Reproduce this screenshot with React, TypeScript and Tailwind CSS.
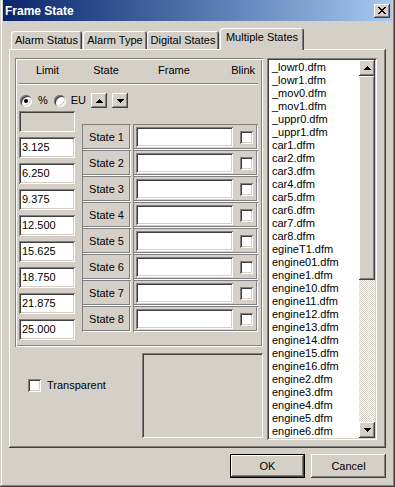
import React from 'react';

// win2000 bevels
const raised = "shadow-[inset_-1px_-1px_#404040,inset_1px_1px_#ffffff,inset_-2px_-2px_#808080,inset_2px_2px_#d4d0c8]";
const sunken = "shadow-[inset_1px_1px_#808080,inset_-1px_-1px_#ffffff,inset_2px_2px_#404040,inset_-2px_-2px_#d4d0c8]";
const etched = "shadow-[inset_1px_1px_#808080,inset_-1px_-1px_#ffffff,inset_-2px_-2px_#808080]";
const groupEdge = "shadow-[inset_1px_1px_#808080,inset_-1px_-1px_#ffffff,inset_2px_2px_#ffffff,inset_-2px_-2px_#808080]";

const limits = ["3.125", "6.250", "9.375", "12.500", "15.625", "18.750", "21.875", "25.000"];

const files = [
  "_lowr0.dfm", "_lowr1.dfm", "_mov0.dfm", "_mov1.dfm", "_uppr0.dfm", "_uppr1.dfm",
  "car1.dfm", "car2.dfm", "car3.dfm", "car4.dfm", "car5.dfm", "car6.dfm", "car7.dfm", "car8.dfm",
  "egineT1.dfm", "engine01.dfm", "engine1.dfm", "engine10.dfm", "engine11.dfm", "engine12.dfm",
  "engine13.dfm", "engine14.dfm", "engine15.dfm", "engine16.dfm", "engine2.dfm", "engine3.dfm",
  "engine4.dfm", "engine5.dfm", "engine6.dfm",
];

const Arrow = ({ down }: { down?: boolean }) => (
  <svg width="7" height="4" viewBox="0 0 7 4" shapeRendering="crispEdges">
    <path d={down ? "M0 0H7L3.5 4z" : "M3.5 0L7 4H0z"} fill="#000" />
  </svg>
);

const Checkbox = () => (
  <div className={`w-[13px] h-[13px] bg-white shrink-0 ${sunken}`} />
);

const Radio = ({ on }: { on?: boolean }) => (
  <div className="w-[12px] h-[12px] rounded-full bg-white shrink-0 flex items-center justify-center shadow-[inset_1px_1px_#808080,inset_-1px_-1px_#ffffff,inset_2px_2px_#404040,inset_-2px_-2px_#d4d0c8]">
    {on && <div className="w-[4px] h-[4px] rounded-full bg-black" />}
  </div>
);

const Tab = ({ label, w, ml }: { label: string; w: string; ml: string }) => (
  <div className={`${w} ${ml} h-[18px] rounded-t-[3px] flex items-center justify-center shadow-[inset_1px_1px_#ffffff,inset_-1px_0_#404040,inset_-2px_0_#808080]`}>
    {label}
  </div>
);

export default function App() {
  return (
    <div className="w-[395px] h-[487px] bg-[#d4d0c8] flex flex-col px-[3px] pb-[3px] text-[11px] text-black font-['Liberation_Sans',Arial,sans-serif] shadow-[inset_-1px_-1px_#404040,inset_1px_0_#d4d0c8,inset_-2px_-2px_#808080,inset_2px_0_#ffffff]">
      {/* title bar */}
      <div className="h-[21px] shrink-0 flex items-center justify-between pl-[2px] pr-[2px] bg-gradient-to-r from-[#0a246a] to-[#a6caf0]">
        <span className="text-white font-bold text-[12px]">Frame State</span>
        <div className={`w-[16px] h-[14px] bg-[#d4d0c8] flex items-center justify-center ${raised}`}>
          <svg width="8" height="7" viewBox="0 0 8 7" shapeRendering="crispEdges">
            <path d="M0 0h2v1h-2zM6 0h2v1h-2zM1 1h2v1h-2zM5 1h2v1h-2zM2 2h4v1h-4zM3 3h2v1h-2zM2 4h4v1h-4zM1 5h2v1h-2zM5 5h2v1h-2zM0 6h2v1h-2zM6 6h2v1h-2z" fill="#000" />
          </svg>
        </div>
      </div>

      <div className="flex-1 flex flex-col px-[6px]">
        {/* tabs */}
        <div className="h-[28px] flex items-end pl-[2px]">
          <Tab label="Alarm Status" w="w-[71px]" ml="ml-0" />
          <Tab label="Alarm Type" w="w-[64px]" ml="ml-[1px]" />
          <Tab label="Digital States" w="w-[72px]" ml="ml-0" />
          <div className="relative z-10 w-[84px] ml-[1px] h-[22px] -mb-[1px] pb-[3px] bg-[#d4d0c8] rounded-t-[3px] flex items-center justify-center shadow-[inset_1px_1px_#ffffff,inset_-1px_0_#404040,inset_-2px_0_#808080]">
            Multiple States
          </div>
        </div>

        {/* tab panel */}
        <div className={`h-[399px] flex pl-[6px] pt-[9px] pr-[9px] gap-[4px] ${raised}`}>
          <div className="w-[248px] flex flex-col">
            {/* states group */}
            <div className={`h-[289px] flex flex-col ${groupEdge}`}>
              <div className="h-[25px] flex items-center pl-[4px] pr-[8px]">
                <span className="w-[57px] text-center">Limit</span>
                <span className="w-[50px] ml-[5px] text-center">State</span>
                <span className="ml-[27px]">Frame</span>
                <span className="ml-auto">Blink</span>
              </div>
              <div className="ml-[4px] mr-[5px] h-[2px] border-t border-t-[#808080] border-b border-b-white" />
              <div className="mt-[8px] h-[15px] flex items-center pl-[5px]">
                <Radio on />
                <span className="ml-[6px]">%</span>
                <div className="ml-[6px]"><Radio /></div>
                <span className="ml-[5px]">EU</span>
                <div className={`ml-[5px] w-[16px] h-[15px] flex items-center justify-center ${raised}`}><Arrow /></div>
                <div className={`ml-[5px] w-[16px] h-[15px] flex items-center justify-center ${raised}`}><Arrow down /></div>
              </div>
              <div className="mt-[3px] flex pl-[4px]">
                <div className="w-[56px] flex flex-col gap-[5px]">
                  <div className={`h-[21px] ${sunken}`} />
                  {limits.map((l) => (
                    <div key={l} className={`h-[21px] bg-white flex items-center pl-[3px] ${sunken}`}>{l}</div>
                  ))}
                </div>
                <div className="ml-[7px] mt-[13px] flex flex-col">
                  {[1, 2, 3, 4, 5, 6, 7, 8].map((i) => (
                    <div key={i} className="h-[26px] flex gap-[2px]">
                      <div className={`w-[49px] flex items-center justify-center ${etched}`}>State {i}</div>
                      <div className={`w-[125px] flex items-center pl-[3px] pr-[5px] ${etched}`}>
                        <div className={`w-[97px] h-[20px] bg-white ${sunken}`} />
                        <div className="ml-auto"><Checkbox /></div>
                      </div>
                    </div>
                  ))}
                </div>
              </div>
            </div>

            {/* transparent + preview */}
            <div className="mt-[6px] flex">
              <div className="flex-1 pl-[13px] pt-[24px]">
                <div className="flex items-center">
                  <Checkbox />
                  <span className="ml-[6px]">Transparent</span>
                </div>
              </div>
              <div className={`w-[121px] h-[85px] ${sunken}`} />
            </div>
          </div>

          {/* file list */}
          <div className={`w-[110px] h-[382px] bg-white p-[2px] flex ${sunken}`}>
            <div className="flex-1 overflow-hidden pl-[3px] pt-[1px]">
              {files.map((f) => (
                <div key={f} className="h-[13px] leading-[13px] whitespace-nowrap">{f}</div>
              ))}
            </div>
            <div className="w-[16px] flex flex-col">
              <div className={`h-[16px] bg-[#d4d0c8] flex items-center justify-center ${raised}`}><Arrow /></div>
              <div className={`h-[204px] bg-[#d4d0c8] ${raised}`} />
              <div className="flex-1 bg-[repeating-conic-gradient(#d4d0c8_0%_25%,#ffffff_0%_50%)] bg-size-[2px_2px]" />
              <div className={`h-[16px] bg-[#d4d0c8] flex items-center justify-center ${raised}`}><Arrow down /></div>
            </div>
          </div>
        </div>

        {/* buttons */}
        <div className="mt-[6px] flex justify-end gap-[6px]">
          <div className="w-[75px] h-[24px] border border-black">
            <div className={`w-full h-full flex items-center justify-center ${raised}`}>OK</div>
          </div>
          <div className={`w-[75px] h-[24px] flex items-center justify-center ${raised}`}>Cancel</div>
        </div>
      </div>
    </div>
  );
}
